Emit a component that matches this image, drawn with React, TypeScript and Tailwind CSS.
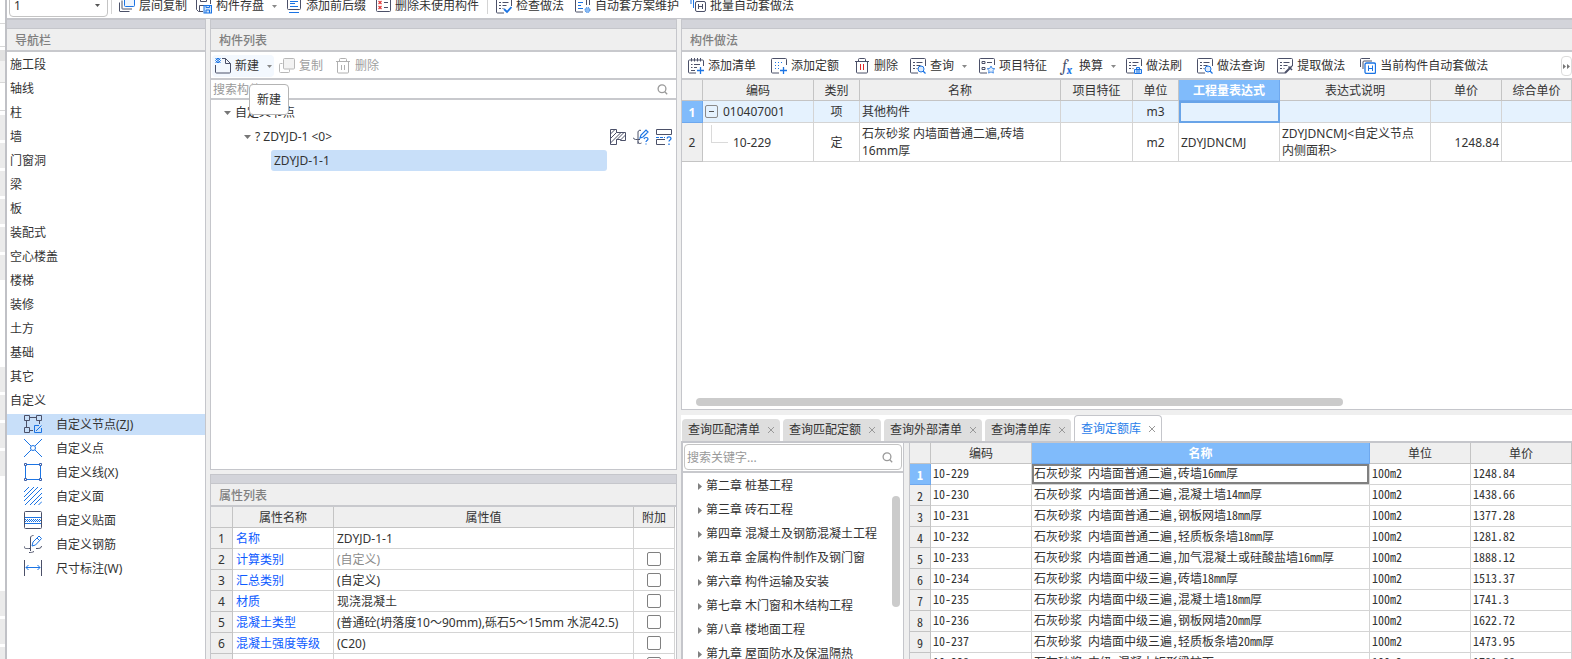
import type { ReactNode } from "react"
import clsx from "clsx"

const DARK = "#4b5068"
const BLUE = "#1b74e4"

function Svg({ children, size = 16, color = DARK }: { children: ReactNode; size?: number; color?: string }) {
  return (
    <svg width={size} height={size} viewBox={`0 0 ${size} ${size}`} fill="none" stroke={color} strokeWidth="1" className="shrink-0">
      {children}
    </svg>
  )
}

function Caret({ className }: { className?: string }) {
  return (
    <svg width="5" height="3" viewBox="0 0 5 3" className={clsx("shrink-0", className)}>
      <path d="M0 0h5L2.5 3z" fill="currentColor" />
    </svg>
  )
}

function TreeCaret() {
  return (
    <svg width="7" height="4" viewBox="0 0 7 4" className="shrink-0">
      <path d="M0 0h7L3.5 4z" fill="#777" />
    </svg>
  )
}

function SearchIcon() {
  return (
    <svg width="11" height="11" viewBox="0 0 11 11" fill="none" stroke="#9a9a9a" strokeWidth="1.3" className="shrink-0">
      <circle cx="5" cy="4.8" r="3.9" />
      <path d="M7.8 7.8l2.4 2.4" />
    </svg>
  )
}

/* Document outline shared by most toolbar icons, bottom right corner left open */
const Doc = () => (
  <>
    <path d="M15.500 8V1.500a1 1 0 0 0-1-1h-13a1 1 0 0 0-1 1V14a1 1 0 0 0 1 1H8" />
    <path d="M3 4.500h2M6.500 4.500h6M3 7.500h2M6.500 7.500h4M3 10.500h2M6.500 10.500h1" />
  </>
)

const icons = {
  layers: (
    <Svg>
      <rect x="5.500" y="-1.500" width="10" height="10" rx="1" fill="#eef5fe" stroke={BLUE} />
      <path d="M3 2.500v8a.5.5 0 0 0 .5.5h9.500M.5 4.500v8.500a.5.5 0 0 0 .5.5h9.500" />
    </Svg>
  ),
  save: (
    <Svg>
      <path d="M7 13.500H2.500l-2-2V.5h14V6M3.500 13V7.500h5M4.500.500v3h6v-3" />
      <rect x="8" y="7.500" width="7.500" height="7.500" fill="#cfe3fb" stroke={BLUE} />
      <path d="M10 15v-3h3.500v3M10 8v1.500h3.500V8" stroke={BLUE} />
    </Svg>
  ),
  affix: (
    <Svg>
      <rect x="1.500" y=".5" width="13" height="11" rx="1" />
      <path d="M4 3.500h8M4 5.500h5M4 8.500h8M3 14.500h10" stroke={BLUE} />
    </Svg>
  ),
  unused: (
    <Svg>
      <rect x="1.500" y="-.5" width="14" height="14" rx="1" />
      <path d="M9 4.500h4M9 9.500h4" />
      <path d="M3.500 3l3 3M6.500 3l-3 3M3.500 8l3 3M6.500 8l-3 3" stroke="#e23b3b" strokeWidth="1.200" />
    </Svg>
  ),
  check: (
    <Svg>
      <Doc />
      <path d="M8 11l3 3 4.500-5" stroke={BLUE} strokeWidth="1.800" />
    </Svg>
  ),
  maintain: (
    <Svg>
      <path d="M9 .500H1.500a1 1 0 0 0-1 1V13a1 1 0 0 0 1 1H8M11.500 0v7M14.500 0v7" />
      <path d="M3 4.500h5M3 7.500h3M3 10.500h5" stroke={BLUE} />
      <circle cx="12.500" cy="12" r="2.500" fill="#8cbcf4" stroke={BLUE} strokeDasharray="1 1" />
    </Svg>
  ),
  batch: (
    <Svg>
      <path d="M1 2v4M3.500 2v8" stroke={BLUE} />
      <rect x="5.500" y="3.500" width="10" height="10" rx="1.500" />
      <path d="M8.500 6v5M12.500 6v5M8.500 8.500h4" />
    </Svg>
  ),
  create: (
    <Svg>
      <path d="M7 .500h3.500l5 5V14a1 1 0 0 1-1 1h-13a1 1 0 0 1-1-1V7M10.500.500v5h5" />
      <path d="M.5 0l5 5M3 0l2.500 2.500M5.500 0l-5 5M3 5L.5 2.500M3 0L.5 2.500M5.500 2.500L3 5" stroke={BLUE} />
    </Svg>
  ),
  copy: (
    <Svg color="#b8b8b8">
      <path d="M3.500 5.500H1.500a1 1 0 0 0-1 1v7a1 1 0 0 0 1 1h8a1 1 0 0 0 1-1v-2" />
      <rect x="4.500" y=".500" width="11" height="10.500" rx="1" fill="#f3f3f3" />
    </Svg>
  ),
  trashGray: (
    <Svg color="#b0b0b0">
      <path d="M1 3.500h14M4.500 3V1.500a1 1 0 0 1 1-1h5a1 1 0 0 1 1 1V3M2.500 4v10a1 1 0 0 0 1 1h9a1 1 0 0 0 1-1V4M6.500 7v5M9.500 7v5" />
    </Svg>
  ),
  trash: (
    <Svg>
      <path d="M1 3.500h14M4.500 3V1.500a1 1 0 0 1 1-1h5a1 1 0 0 1 1 1V3M2.500 4v10a1 1 0 0 0 1 1h9a1 1 0 0 0 1-1V4" />
      <path d="M6.500 6v6M9.500 6v6" stroke="#e02828" />
    </Svg>
  ),
  addList: (
    <Svg>
      <path d="M15.500 8V3a1 1 0 0 0-1-1h-13a1 1 0 0 0-1 1v11a1 1 0 0 0 1 1H8M3.500 0v3.500M6.500 0v3.500M9.500 0v3.500M12.500 0v3.500M3 6.500h1.500M6 6.500h6M3 9.500h1.500M6 9.500h3M3 12.500h4" />
      <path d="M12.500 9v7M9 12.500h7" stroke={BLUE} strokeWidth="1.300" />
    </Svg>
  ),
  addQuota: (
    <Svg>
      <path d="M15.500 7V1.500a1 1 0 0 0-1-1h-13a1 1 0 0 0-1 1V14a1 1 0 0 0 1 1H8" />
      <path d="M4 4.500h8M4 7.500h6M4 10.500h4" strokeDasharray="1 2" stroke={BLUE} />
      <path d="M12.500 9v7M9 12.500h7" stroke={BLUE} strokeWidth="1.300" />
    </Svg>
  ),
  query: (
    <Svg>
      <Doc />
      <circle cx="11" cy="11" r="3" fill="#dcebfd" stroke={BLUE} />
      <path d="M13 13l2.500 2.500" stroke={BLUE} strokeWidth="1.300" />
    </Svg>
  ),
  feature: (
    <Svg>
      <path d="M15.500 7V1.500a1 1 0 0 0-1-1h-13a1 1 0 0 0-1 1V14a1 1 0 0 0 1 1H8M3 3.500h3v2H3zM3 9.500h3v2H3zM8 4.500h5" />
      <path d="M12 8l1.200 2.400 2.600.300-1.900 1.800.5 2.600-2.400-1.200-2.400 1.200.5-2.600-1.900-1.800 2.600-.300z" stroke="#4a90e8" fill="#e3effd" />
    </Svg>
  ),
  brush: (
    <Svg>
      <Doc />
      <path d="M8.500 11.500h7v4h-7zM10.500 11V9.500h3V11M11 12v3M13 12v3" stroke={BLUE} fill="#cfe3fb" />
    </Svg>
  ),
  extract: (
    <Svg>
      <Doc />
      <path d="M8 15l5-5" strokeWidth="2" />
      <path d="M11.500 8.500l3.500 3.500M13 10l2-2" strokeWidth="1.600" />
    </Svg>
  ),
  autoSet: (
    <Svg>
      <path d="M.500 9V1.500a1 1 0 0 1 1-1H10M3 11V4a1 1 0 0 1 1-1h8" />
      <rect x="5" y="5" width="10.500" height="10.500" rx="1.500" fill="#fff" stroke={BLUE} strokeWidth="1.300" />
      <path d="M8.500 7.500v5.500M12.500 7.500v5.500M8.500 10.500h4" stroke={BLUE} />
    </Svg>
  ),
  hatch: (
    <Svg>
      <path d="M.5.500h6v3h9v8h-5v-1h-4v5h-6z" />
      <path d="M.500 5L5 .500M.500 9.500L6.500 3.500M.500 14L11 3.500M6.500 11L14 3.500M10.500 11L15.500 6" />
    </Svg>
  ),
  rebar: (
    <Svg>
      <path d="M5 15V3a2 2 0 0 1 3-1.500M0 8.500C1 11 3 10.500 7 10.500M5 12.500c0 2 2 2.500 3.500 1.500" />
      <path d="M7 9l1-3 5-5 2 2-5 5zM11 10c.5-2 4-2 4 0 0 1.500-2 1.500-2 3M13 14.500v1" stroke={BLUE} strokeWidth="1.200" />
    </Svg>
  ),
  section: (
    <Svg>
      <path d="M.500.500h15v5H.500zM9 10.500H.500v5H9" />
      <path d="M0 8.500h9" strokeDasharray="3 1" stroke={BLUE} />
      <path d="M11 9.500c.5-2.500 4-2 4 0 0 1.500-2 1.500-2 3M13 14.500v1.500" stroke={BLUE} strokeWidth="1.300" />
    </Svg>
  ),
  node: (
    <Svg size={18}>
      <path d="M.500.500h5v5h-5zM12.500.500h5v5h-5zM.500 12.500h5v5h-5zM5.500 2.500h7M2.500 5.500v7M15.500 5.500V9M5.500 15.500H9" />
      <path d="M15 10.500h-4.500v7h7V13M12 16l5.500-5.500" stroke={BLUE} />
    </Svg>
  ),
  point: (
    <Svg size={18}>
      <path d="M0 0l7 7M11 11l7 7M18 0l-7 7M7 11l-7 7" stroke={BLUE} />
      <circle cx="9" cy="9" r="2.500" stroke={BLUE} />
    </Svg>
  ),
  line: (
    <Svg size={18}>
      <path d="M1.500 1.500h15v15h-15z" stroke={BLUE} />
      <path d="M.5.500h2v2h-2zM15.500.500h2v2h-2zM.500 15.500h2v2h-2zM15.500 15.500h2v2h-2z" fill="#fff" stroke="#3d5fa8" />
    </Svg>
  ),
  face: (
    <Svg size={18}>
      <path d="M0 5L5 0M0 10L10 0M0 14L14 0M1 18L18 1M6 18L18 6M10 18l8-8M14.500 18l3.500-3.500" stroke={BLUE} />
    </Svg>
  ),
  veneer: (
    <Svg size={18}>
      <rect x=".500" y=".500" width="17" height="17" rx="1" />
      <path d="M1 6.500h16M1 12.500h16" stroke={BLUE} />
      <path d="M1 8.500h16M2 9.500h15M1 10.500h16" stroke={BLUE} strokeDasharray="1 1" />
    </Svg>
  ),
  steel: (
    <Svg size={18}>
      <path d="M6.500 16V3c0-2 1.500-2.500 3-2.500M0 11c0 3 2 2.500 6 2.500M12 13.500c3 0 5.500 0 5.500-2.500M5 17.500c2 0 3 0 5-1" />
      <path d="M8 11l1-4 6-6 2.500 2.500-6 6.500zM13 3l2.500 2.500" stroke={BLUE} />
    </Svg>
  ),
  dimension: (
    <Svg size={18}>
      <path d="M.500 1v16M17.500 1v16" />
      <path d="M2 8.500h14M4.500 6L2 8.500 4.500 11M13.500 6L16 8.500 13.500 11" stroke={BLUE} />
    </Svg>
  ),
}

type Tool = { icon: ReactNode; label: string; caret?: boolean; gap?: string; disabled?: boolean }

const topTools: Tool[] = [
  { icon: icons.layers, label: "层间复制" },
  { icon: icons.save, label: "构件存盘", caret: true },
  { icon: icons.affix, label: "添加前后缀" },
  { icon: icons.unused, label: "删除未使用构件" },
]

const topTools2: Tool[] = [
  { icon: icons.check, label: "检查做法" },
  { icon: icons.maintain, label: "自动套方案维护" },
  { icon: icons.batch, label: "批量自动套做法" },
]

const methodTools: Tool[] = [
  { icon: icons.addList, label: "添加清单", gap: "mr-[15px]" },
  { icon: icons.addQuota, label: "添加定额", gap: "mr-[15px]" },
  { icon: icons.trash, label: "删除", gap: "mr-3" },
  { icon: icons.query, label: "查询", caret: true, gap: "mr-3" },
  { icon: icons.feature, label: "项目特征", gap: "mr-3" },
  {
    icon: (
      <span className="w-4 shrink-0 font-serif text-[16px] leading-4 italic text-[#4b5068]">
        f<sub className="text-[11px] font-bold leading-none text-[#1b74e4]">x</sub>
      </span>
    ),
    label: "换算",
    caret: true,
    gap: "mr-[10px]",
  },
  { icon: icons.brush, label: "做法刷", gap: "mr-[15px]" },
  { icon: icons.query, label: "做法查询", gap: "mr-3" },
  { icon: icons.extract, label: "提取做法", gap: "mr-[15px]" },
  { icon: icons.autoSet, label: "当前构件自动套做法" },
]

const navGroups = ["施工段", "轴线", "柱", "墙", "门窗洞", "梁", "板", "装配式", "空心楼盖", "楼梯", "装修", "土方", "基础", "其它", "自定义"]

const navItems = [
  { icon: icons.node, label: "自定义节点(ZJ)", active: true },
  { icon: icons.point, label: "自定义点" },
  { icon: icons.line, label: "自定义线(X)" },
  { icon: icons.face, label: "自定义面" },
  { icon: icons.veneer, label: "自定义贴面" },
  { icon: icons.steel, label: "自定义钢筋" },
  { icon: icons.dimension, label: "尺寸标注(W)" },
]

const properties = [
  { name: "名称", value: "ZDYJD-1-1", noExtra: true },
  { name: "计算类别", value: "(自定义)", muted: true },
  { name: "汇总类别", value: "(自定义)" },
  { name: "材质", value: "现浇混凝土" },
  { name: "混凝土类型", value: "(普通砼(坍落度10～90mm),砾石5～15mm 水泥42.5)" },
  { name: "混凝土强度等级", value: "(C20)" },
  { name: "", value: "" },
]

const tabs = [
  { label: "查询匹配清单" },
  { label: "查询匹配定额" },
  { label: "查询外部清单" },
  { label: "查询清单库" },
  { label: "查询定额库", active: true },
]

const chapters = [
  "第二章 桩基工程",
  "第三章 砖石工程",
  "第四章 混凝土及钢筋混凝土工程",
  "第五章 金属构件制作及钢门窗",
  "第六章 构件运输及安装",
  "第七章 木门窗和木结构工程",
  "第八章 楼地面工程",
  "第九章 屋面防水及保温隔热",
]

const quotas = [
  ["10-229", "石灰砂浆 内墙面普通二遍,砖墙16mm厚", "1248.84"],
  ["10-230", "石灰砂浆 内墙面普通二遍,混凝土墙14mm厚", "1438.66"],
  ["10-231", "石灰砂浆 内墙面普通二遍,钢板网墙18mm厚", "1377.28"],
  ["10-232", "石灰砂浆 内墙面普通二遍,轻质板条墙18mm厚", "1281.82"],
  ["10-233", "石灰砂浆 内墙面普通二遍,加气混凝土或硅酸盐墙16mm厚", "1888.12"],
  ["10-234", "石灰砂浆 内墙面中级三遍,砖墙18mm厚", "1513.37"],
  ["10-235", "石灰砂浆 内墙面中级三遍,混凝土墙18mm厚", "1741.3"],
  ["10-236", "石灰砂浆 内墙面中级三遍,钢板网墙20mm厚", "1622.72"],
  ["10-237", "石灰砂浆 内墙面中级三遍,轻质板条墙20mm厚", "1473.95"],
  ["10-238", "石灰砂浆 中级 混凝土矩形梁柱面", "1781.88"],
]

function ToolButton({ icon, label, caret, gap, disabled }: Tool) {
  return (
    <button disabled={disabled} className={clsx("flex shrink-0 items-center gap-1 whitespace-nowrap", disabled && "text-[#a0a0a0]", gap)}>
      {icon}
      {label}
      {caret && <Caret className="ml-1 text-[#888]" />}
    </button>
  )
}

function PanelTitle({ children }: { children: ReactNode }) {
  return (
    <div className="shrink-0">
      <div className="h-[10px] border-y border-[#c5c6cb] bg-[#d3d4da]" />
      <h2 className="h-[23px] border-b-2 border-[#c8c9cd] bg-[#efefef] pt-0.5 pl-2 font-medium leading-[19px] text-[#808080]">{children}</h2>
    </div>
  )
}

const th = "h-[21px] border-r border-b border-[#c4c4c4] bg-[#efefef] px-0 pt-0.5 pb-0 text-center font-normal leading-[18px]"
const thActive = "h-[21px] border-r border-b border-[#6ea8ee] bg-[#80bbfb] px-0 pt-0.5 pb-0 text-center font-bold leading-[18px] text-white"
const td = "border-r border-b border-[#d4d4d4]"

function Toolbar() {
  return (
    <header className="flex h-[19px] shrink-0 items-end overflow-hidden border-b border-[#c5c6cb] bg-white pl-0.5">
      <div className="flex h-6 items-center">
        <div className="relative self-start">
          <select aria-label="楼层" className="h-[23px] w-[99px] appearance-none rounded border border-[#c4c4c4] bg-white pl-1 leading-5">
            <option>1</option>
          </select>
          <Caret className="pointer-events-none absolute top-[10px] right-2 text-[#555]" />
        </div>
        <span className="ml-[3px] h-4 w-px bg-[#d4d4d4]" />
        <div className="flex gap-[9px] pl-[7px]">
          {topTools.map((t) => (
            <ToolButton key={t.label} {...t} />
          ))}
        </div>
        <span className="mx-2 h-4 w-px bg-[#d4d4d4]" />
        <div className="flex gap-[11px]">
          {topTools2.map((t) => (
            <ToolButton key={t.label} {...t} />
          ))}
        </div>
      </div>
    </header>
  )
}

function NavPanel() {
  return (
    <nav className="flex w-[199px] shrink-0 flex-col overflow-hidden border-r border-[#c5c6cb] bg-white">
      <PanelTitle>导航栏</PanelTitle>
      <ul>
        {navGroups.map((g) => (
          <li key={g} className="h-6 pt-0.5 pl-[3px] leading-[22px]">
            {g}
          </li>
        ))}
        {navItems.map((n) => (
          <li key={n.label} className="flex h-6 items-center">
            <div className={clsx("flex h-[21px] w-full items-center gap-[14px] pl-[17px]", n.active && "bg-[#c8dff9]")}>
              {n.icon}
              <span className="pt-0.5 leading-[18px]">{n.label}</span>
            </div>
          </li>
        ))}
      </ul>
    </nav>
  )
}

function ComponentList() {
  return (
    <section className="flex min-h-0 flex-[451_1_0%] flex-col overflow-hidden border border-t-0 border-[#c5c6cb] bg-white">
      <PanelTitle>构件列表</PanelTitle>
      <div className="relative flex h-7 shrink-0 items-center gap-1 border-b-2 border-[#c8c9cd] pt-0.5 pl-px">
        <div className="flex h-[22px] w-[62px] items-center rounded bg-[#f3f8fe] pl-[3px]">
          <ToolButton icon={icons.create} label="新建" caret />
        </div>
        <div className="flex gap-3 pl-px">
          <ToolButton icon={icons.copy} label="复制" disabled />
          <ToolButton icon={icons.trashGray} label="删除" disabled />
        </div>
        <div role="tooltip" className="absolute top-8 left-[38px] z-10 flex h-[31px] w-10 items-center justify-center rounded border border-[#b4b4b4] bg-white">
          新建
        </div>
      </div>
      <label className="flex h-5 shrink-0 items-center border-b-2 border-[#c8c9cd] pr-2 pl-0.5">
        <input type="text" aria-label="搜索构件" placeholder="搜索构件..." className="h-[18px] min-w-0 flex-1 pt-0.5 outline-none placeholder:text-[#999]" />
        <SearchIcon />
      </label>
      <ul>
        <li className="flex h-6 items-center gap-1 pt-0.5 pl-[13px]">
          <TreeCaret />
          自定义节点
        </li>
        <li className="flex h-6 items-center gap-1 pt-0.5 pr-1 pl-[33px]">
          <TreeCaret />
          <span className="flex-1">? ZDYJD-1 &lt;0&gt;</span>
          <span className="flex gap-[7px]">
            {icons.hatch}
            {icons.rebar}
            {icons.section}
          </span>
        </li>
        <li className="flex h-6 items-center pr-[69px] pl-[60px]">
          <span className="h-[21px] flex-1 rounded-[3px] bg-[#c8dff9] pl-[3px] leading-[21px]">ZDYJD-1-1</span>
        </li>
      </ul>
    </section>
  )
}

function PropertyList() {
  return (
    <section className="min-h-0 flex-[185_1_0%] overflow-hidden border-x border-[#c5c6cb] bg-white">
      <PanelTitle>属性列表</PanelTitle>
      <div className="pr-px">
        <table className="w-full table-fixed border-separate border-spacing-0">
          <colgroup>
            <col className="w-[22px]" />
            <col className="w-[101px]" />
            <col />
            <col className="w-[41px]" />
          </colgroup>
          <thead>
            <tr>
              <th className={th} />
              <th className={th}>属性名称</th>
              <th className={th}>属性值</th>
              <th className={th}>附加</th>
            </tr>
          </thead>
          <tbody className="leading-[18px]">
            {properties.map((p, i) => (
              <tr key={i} className="h-[21px]">
                <th className={th}>{i + 1}</th>
                <td className={clsx(td, "px-[3px] pt-0.5 text-[#0d5bff]")}>{p.name}</td>
                <td className={clsx(td, "px-[3px] pt-0.5 whitespace-nowrap", p.muted && "text-[#8c8c8c]")}>{p.value}</td>
                <td className={td}>
                  {!p.noExtra && (
                    <input
                      type="checkbox"
                      aria-label={`${p.name}附加`}
                      className="mx-auto block size-[14px] appearance-none rounded-xs border border-[#808080] bg-white"
                    />
                  )}
                </td>
              </tr>
            ))}
          </tbody>
        </table>
      </div>
    </section>
  )
}

function MethodPanel() {
  return (
    <section className="flex min-h-0 flex-[391_1_0%] flex-col overflow-hidden border-b border-l border-[#c5c6cb] bg-white">
      <PanelTitle>构件做法</PanelTitle>
      <div className="flex h-7 shrink-0 items-center border-b-2 border-[#c8c9cd] pt-0.5 pl-1.5">
        <div className="flex flex-1">
          {methodTools.map((t) => (
            <ToolButton key={t.label} {...t} />
          ))}
        </div>
        <button aria-label="更多" className="flex h-5 w-[11px] items-center justify-center rounded border border-[#dcdcdc]">
          <svg width="8" height="5" viewBox="0 0 8 5" fill="#777">
            <path d="M0 0l3 2.500L0 5zM4 0l3 2.500L4 5z" />
          </svg>
        </button>
      </div>
      <table className="w-full table-fixed border-separate border-spacing-0">
        <colgroup>
          <col className="w-[21px]" />
          <col className="w-[111px]" />
          <col className="w-[46px]" />
          <col className="w-[201px]" />
          <col className="w-[72px]" />
          <col className="w-[46px]" />
          <col className="w-[101px]" />
          <col className="w-[151px]" />
          <col className="w-[71px]" />
          <col />
        </colgroup>
        <thead>
          <tr>
            <th className={th} />
            <th className={th}>编码</th>
            <th className={th}>类别</th>
            <th className={th}>名称</th>
            <th className={th}>项目特征</th>
            <th className={th}>单位</th>
            <th className={thActive}>工程量表达式</th>
            <th className={th}>表达式说明</th>
            <th className={th}>单价</th>
            <th className={th}>综合单价</th>
          </tr>
        </thead>
        <tbody>
          <tr className="h-[22px] bg-[#e5f2fe]">
            <th className={thActive}>1</th>
            <td className={clsx(td, "px-0.5")}>
              <div className="flex items-center gap-[5px]">
                <button aria-label="折叠" className="flex size-[13px] items-center justify-center rounded-xs border border-[#8a8a8a]">
                  <span className="h-px w-[5px] bg-[#555]" />
                </button>
                010407001
              </div>
            </td>
            <td className={clsx(td, "text-center")}>项</td>
            <td className={clsx(td, "pr-2 pl-0.5")}>其他构件</td>
            <td className={td} />
            <td className={clsx(td, "text-center")}>m3</td>
            <td className="p-0 shadow-[inset_0_0_0_2px_#69a4e8]" />
            <td className={td} />
            <td className={td} />
            <td className={td} />
          </tr>
          <tr className="h-[39px] leading-[17px]">
            <th className={th}>2</th>
            <td className={clsx(td, "px-0.5")}>
              <div className="flex items-center gap-[5px] pl-1.5">
                <span className="mb-[17px] h-[18px] w-[17px] border-b border-l border-[#dadada]" />
                10-229
              </div>
            </td>
            <td className={clsx(td, "text-center")}>定</td>
            <td className={clsx(td, "pr-2 pl-0.5")}>石灰砂浆 内墙面普通二遍,砖墙16mm厚</td>
            <td className={td} />
            <td className={clsx(td, "text-center")}>m2</td>
            <td className={clsx(td, "pr-2 pl-0.5")}>ZDYJDNCMJ</td>
            <td className={clsx(td, "pr-2 pl-0.5")}>ZDYJDNCMJ&lt;自定义节点内侧面积&gt;</td>
            <td className={clsx(td, "px-0.5 text-right")}>1248.84</td>
            <td className={td} />
          </tr>
        </tbody>
      </table>
      <div className="mt-auto mb-[3px] pr-[229px] pl-[14px]">
        <div className="h-2 rounded-full bg-[#cbcbcb]" />
      </div>
    </section>
  )
}

function ChapterTree() {
  return (
    <aside className="flex w-[223px] shrink-0 flex-col overflow-hidden border-r border-l-2 border-[#c5c6cb] bg-white">
      <div className="shrink-0 border-b-2 border-[#c8c9cd] px-px py-px">
        <label className="flex h-[26px] items-center rounded border border-[#c4c4c4] pr-2 pl-0.5">
          <input type="text" aria-label="搜索关键字" placeholder="搜索关键字..." className="min-w-0 flex-1 pt-0.5 outline-none placeholder:text-[#999]" />
          <SearchIcon />
        </label>
      </div>
      <div className="relative min-h-0 flex-1 overflow-hidden">
        <ul className="pt-px">
          {chapters.map((c) => (
            <li key={c} className="flex h-6 items-center gap-1 pl-[15px] leading-6 whitespace-nowrap">
              <svg width="4" height="7" viewBox="0 0 4 7" className="shrink-0">
                <path d="M0 0l4 3.500L0 7z" fill="#808080" />
              </svg>
              {c}
            </li>
          ))}
        </ul>
        <div className="absolute top-[23px] right-[3px] h-[111px] w-2 rounded-full bg-[#cbcbcb]" />
      </div>
    </aside>
  )
}

function QuotaGrid() {
  return (
    <div className="min-w-0 flex-1 overflow-hidden border-l border-[#c5c6cb] bg-white">
      <table className="w-full table-fixed border-separate border-spacing-0">
        <colgroup>
          <col className="w-[21px]" />
          <col className="w-[101px]" />
          <col />
          <col className="w-[101px]" />
          <col className="w-[101px]" />
        </colgroup>
        <thead>
          <tr>
            <th className={th} />
            <th className={th}>编码</th>
            <th className={thActive}>名称</th>
            <th className={th}>单位</th>
            <th className={th}>单价</th>
          </tr>
        </thead>
        <tbody className="font-['Noto_Sans_Mono_CJK_SC','Noto_Sans_CJK_SC',monospace] leading-[18px]">
          {quotas.map(([code, name, price], i) => (
            <tr key={code} className="h-[21px]">
              <th className={i === 0 ? thActive : th}>{i + 1}</th>
              <td className={clsx(td, "px-0.5 pb-0.5")}>{code}</td>
              <td className={clsx(td, "px-0.5 pb-0.5 whitespace-nowrap", i === 0 && "shadow-[inset_0_0_0_2px_#808080]")}>{name}</td>
              <td className={clsx(td, "px-0.5 pb-0.5")}>100m2</td>
              <td className={clsx(td, "px-0.5 pb-0.5")}>{price}</td>
            </tr>
          ))}
        </tbody>
      </table>
    </div>
  )
}

function QueryPanel() {
  return (
    <section className="flex min-h-0 flex-[244_1_0%] flex-col">
      <div className="flex h-7 shrink-0 items-end gap-[3px] border-b-2 border-[#c5c6cb] bg-white pl-px">
        {tabs.map((t) => (
          <div
            key={t.label}
            className={clsx(
              "flex items-center gap-2 rounded-t px-1.5",
              t.active ? "h-[26px] border border-b-0 border-[#c5c6cb] bg-white text-[#2b80ea]" : "h-[22px] bg-[#dedede]",
            )}
          >
            <button>{t.label}</button>
            <button aria-label={`关闭${t.label}`}>
              <svg width="6" height="6" viewBox="0 0 6 6" stroke="#999" fill="none">
                <path d="M0 0l6 6M6 0L0 6" />
              </svg>
            </button>
          </div>
        ))}
      </div>
      <div className="flex min-h-0 flex-1 gap-[5px]">
        <ChapterTree />
        <QuotaGrid />
      </div>
    </section>
  )
}

/* Sliver of the window that stays visible behind this one */
function Backdrop() {
  return (
    <div className="flex w-[5px] shrink-0 flex-col overflow-hidden bg-white">
      <div className="h-[23px] shrink-0" />
      <div className="h-[24px] shrink-0 border-y border-[#d8d8d8]" />
      <div className="mt-[3px] h-[11px] shrink-0 bg-[#e2e2e2]" />
      <div className="h-[22px] shrink-0 border-b border-[#d8d8d8] bg-[#f2f2f2]" />
      <div className="h-[28px] shrink-0 border-b border-[#d8d8d8]" />
      <div className="mt-1 flex shrink-0 flex-col gap-[3px]">
        {[0, 1, 2, 3, 4, 5].map((i) => (
          <div key={i} className="h-[25px] bg-[#ebebeb]" />
        ))}
      </div>
      <div className="mt-[87px] flex shrink-0 flex-col gap-[3px]">
        {[0, 1, 2, 3].map((i) => (
          <div key={i} className="h-[25px] bg-[#ebebeb]" />
        ))}
      </div>
      <div className="mt-[115px] flex shrink-0 flex-col gap-[3px]">
        {[0, 1, 2].map((i) => (
          <div key={i} className="h-[25px] bg-[#ebebeb]" />
        ))}
      </div>
    </div>
  )
}

export default function App() {
  return (
    <div className="flex h-screen overflow-hidden bg-white font-['Noto_Sans','Noto_Sans_CJK_SC',sans-serif] text-[12px] leading-5 text-[#333]">
      <Backdrop />
      <div className="flex min-w-0 flex-1 flex-col border-l-2 border-[#c0c1c6] bg-[#efefef]">
        <Toolbar />
        <main className="flex min-h-0 flex-1 gap-1">
          <NavPanel />
          <div className="flex w-[467px] shrink-0 flex-col gap-1">
            <ComponentList />
            <PropertyList />
          </div>
          <div className="flex min-w-0 flex-1 flex-col gap-[5px]">
            <MethodPanel />
            <QueryPanel />
          </div>
        </main>
      </div>
    </div>
  )
}
